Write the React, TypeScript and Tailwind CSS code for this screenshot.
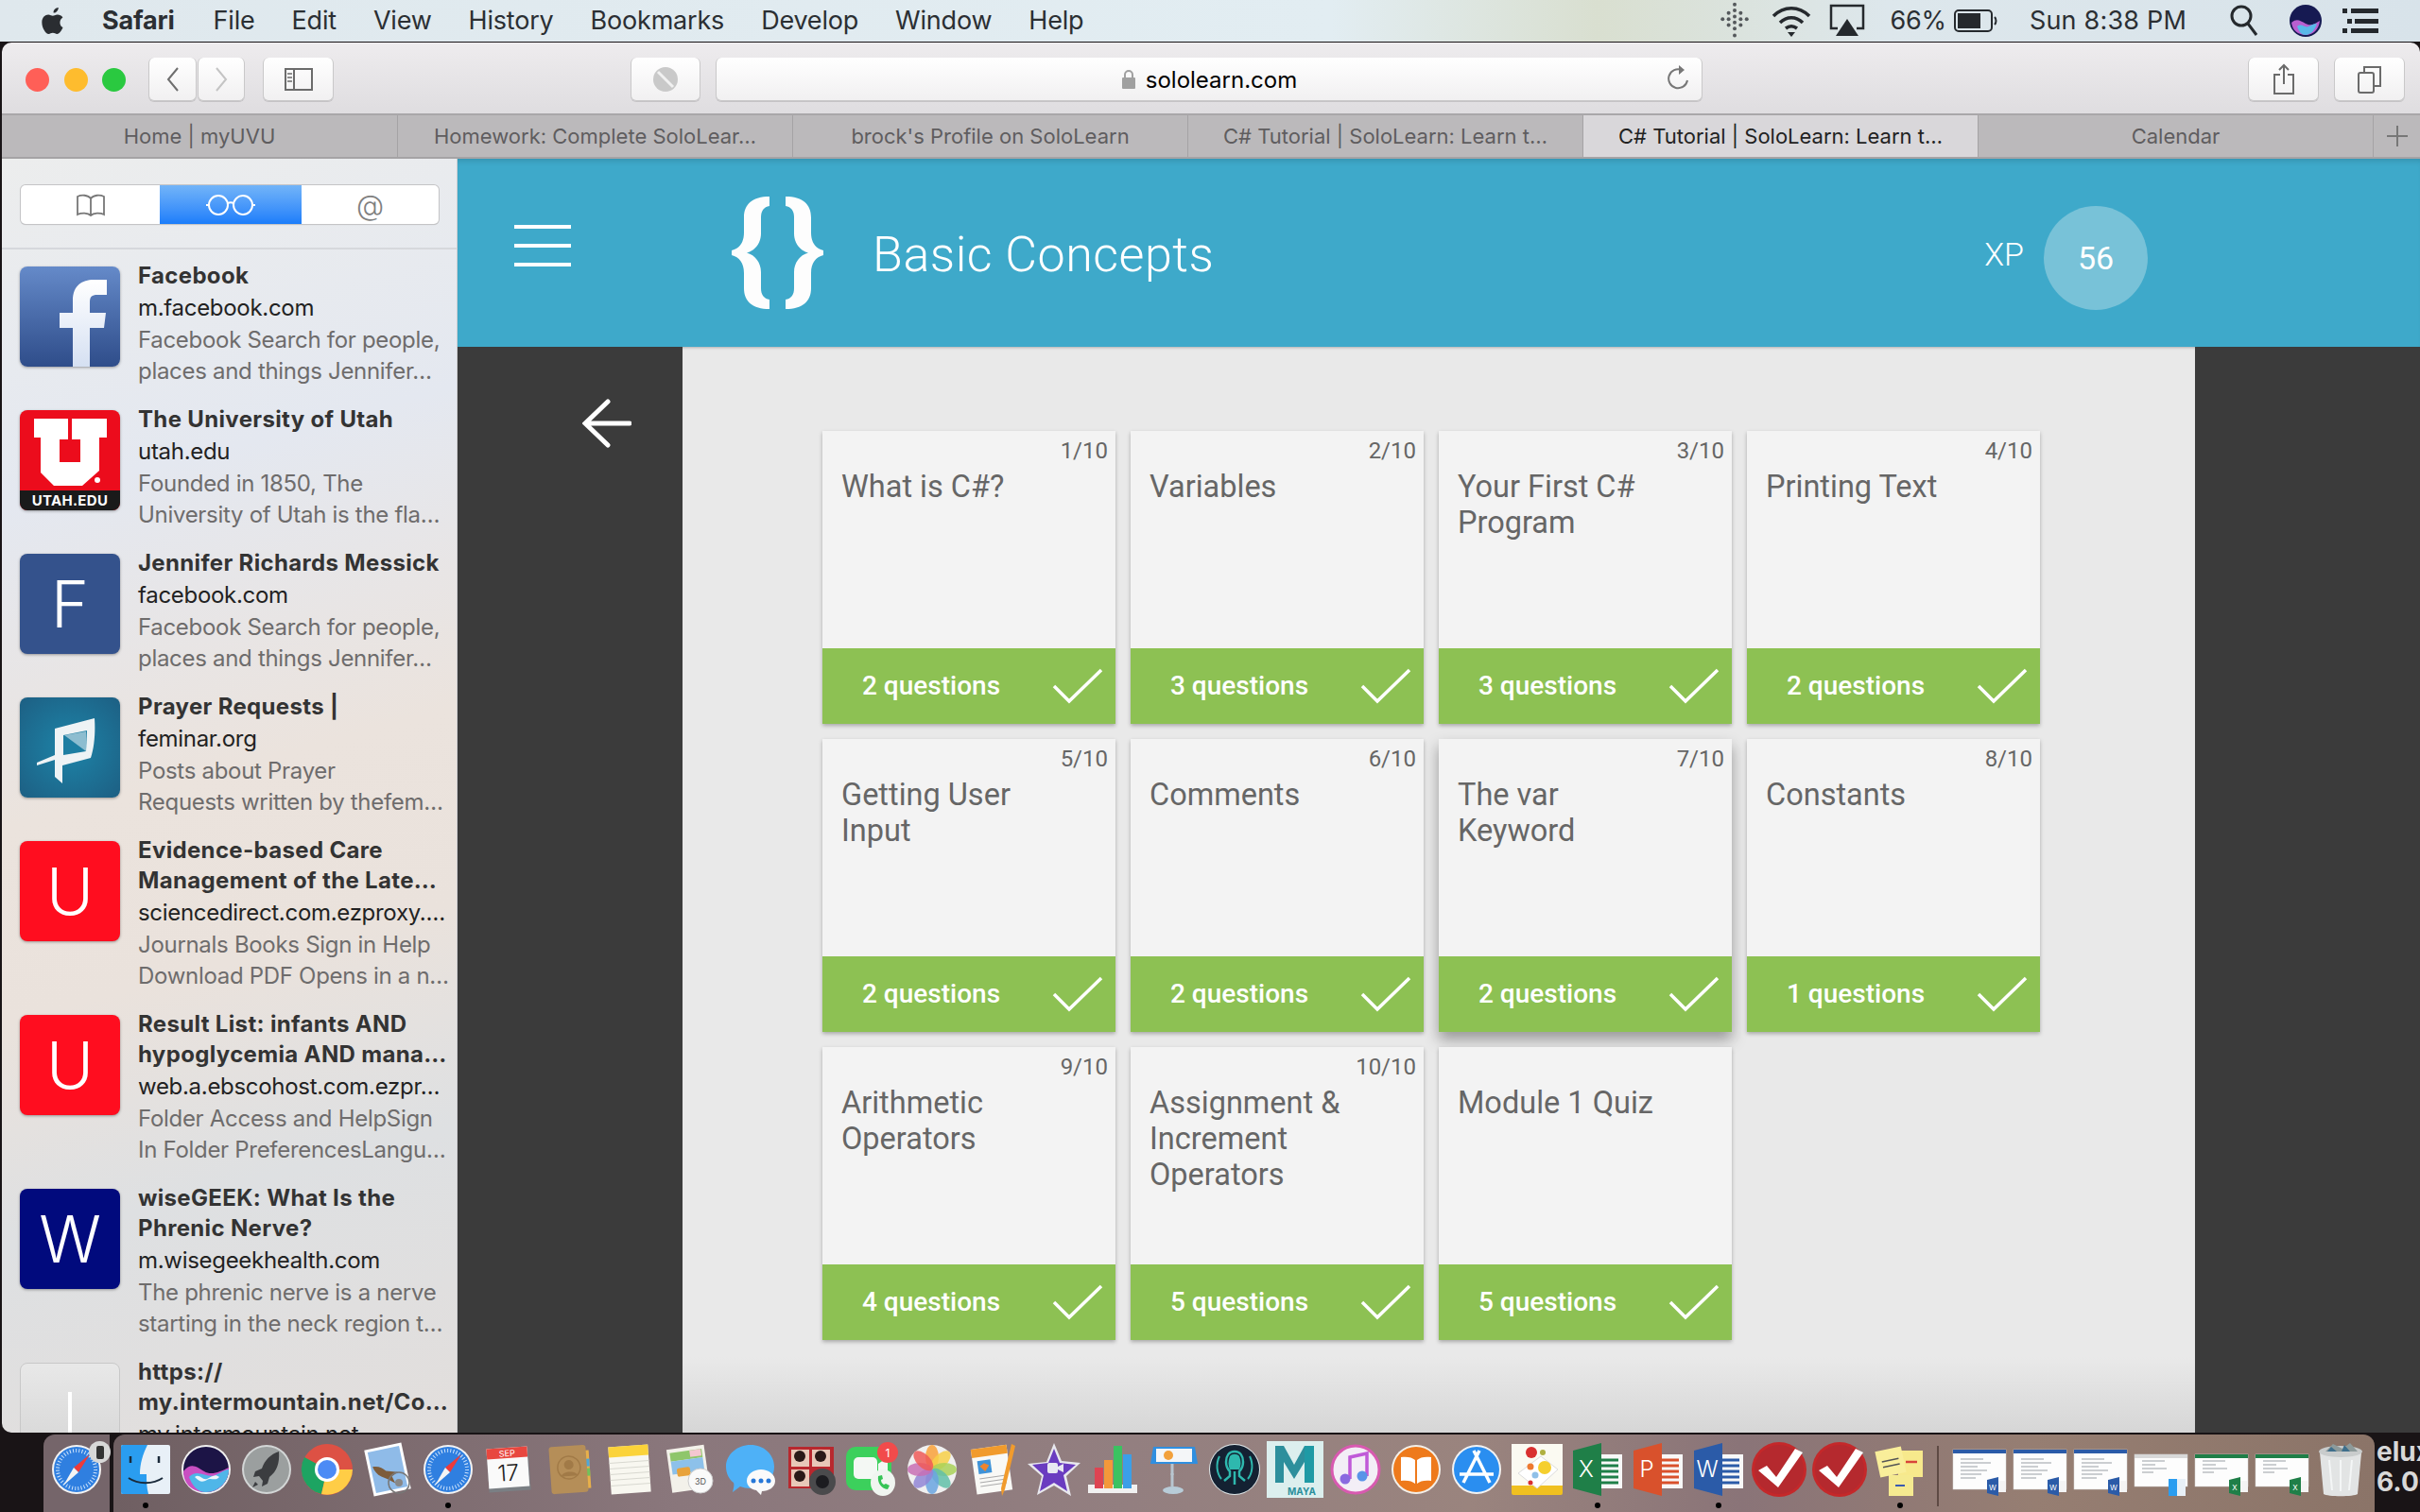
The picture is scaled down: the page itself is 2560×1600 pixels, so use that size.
import type { ReactNode } from 'react'

const menus = ['File', 'Edit', 'View', 'History', 'Bookmarks', 'Develop', 'Window', 'Help']

const tabs = [
  'Home | myUVU',
  'Homework: Complete SoloLear…',
  "brock's Profile on SoloLearn",
  'C# Tutorial | SoloLearn: Learn t…',
  'C# Tutorial | SoloLearn: Learn t…',
  'Calendar',
]

const lessons = [
  { title: 'What is C#?', count: '1/10', q: '2 questions' },
  { title: 'Variables', count: '2/10', q: '3 questions' },
  { title: 'Your First C# Program', count: '3/10', q: '3 questions' },
  { title: 'Printing Text', count: '4/10', q: '2 questions' },
  { title: 'Getting User Input', count: '5/10', q: '2 questions' },
  { title: 'Comments', count: '6/10', q: '2 questions' },
  { title: 'The var Keyword', count: '7/10', q: '2 questions', hover: true },
  { title: 'Constants', count: '8/10', q: '1 questions' },
  { title: 'Arithmetic Operators', count: '9/10', q: '4 questions' },
  { title: 'Assignment & Increment Operators', count: '10/10', q: '5 questions' },
  { title: 'Module 1 Quiz', count: '', q: '5 questions' },
]

const FacebookTile = () => (
  <div className="w-[106px] h-[106px] rounded-[8px] overflow-hidden shadow-[0_1px_3px_rgba(0,0,0,0.35)] bg-linear-to-b from-[#658ac9] to-[#2f4d8a]">
    <svg viewBox="0 0 106 106" className="w-full h-full">
      <defs>
        <linearGradient id="fbf" x1="0" y1="0" x2="0" y2="1">
          <stop offset="0" stopColor="#ffffff" />
          <stop offset="1" stopColor="#d5e0f2" />
        </linearGradient>
      </defs>
      <path d="M56 106V65H42V49h14V36c0-16 10-22 22-22h14v16H82c-6 0-8 2-8 8v11h17l-2 16H74v41z" fill="url(#fbf)" />
    </svg>
  </div>
)

const UtahTile = () => (
  <div className="w-[106px] h-[106px] rounded-[8px] overflow-hidden shadow-[0_1px_3px_rgba(0,0,0,0.35)] bg-[#ec0c1c] flex flex-col">
    <svg viewBox="0 0 106 85" className="w-[106px] h-[85px] shrink-0">
      <path d="M15 9h36v22h-9v24h22V31h-9V9h37v20h-8v35L66 80H36L22 66V29h-7z" fill="#fff" />
      <circle cx="82" cy="74" r="3" fill="#fff" />
    </svg>
    <div className="flex-1 bg-[#1a1a1a] text-white font-bold text-[15px] leading-[21px] text-center tracking-[0.3px]">UTAH.EDU</div>
  </div>
)

const PrayerTile = () => (
  <div className="w-[106px] h-[106px] rounded-[8px] overflow-hidden shadow-[0_1px_3px_rgba(0,0,0,0.35)] bg-[radial-gradient(circle,#1d84a8,#1d5f83)]">
    <svg viewBox="0 0 106 106" className="w-full h-full">
      <path d="M37 33L79 22c1 14 0 30-4 42L45 72v19l-8-7V66l-19 6v-3l19-8z" fill="#eef3f5" />
      <path d="M46 40l25-5-1 22-24 4z" fill="#1d7ea2" />
      <path d="M47 40l23 17V36z" fill="#d8e8ee" opacity="0.6" />
    </svg>
  </div>
)

const LetterTile = ({ letter, color }: { letter: string; color: string }) => (
  <div
    className="w-[106px] h-[106px] rounded-[8px] flex items-center justify-center text-white text-[68px] font-light leading-none shadow-[0_1px_3px_rgba(0,0,0,0.35)]"
    style={{ backgroundColor: color }}
  >
    {letter}
  </div>
)

const reading: { tile: ReactNode; title: string[]; url: string; text: string[] }[] = [
  { tile: <FacebookTile />, title: ['Facebook'], url: 'm.facebook.com', text: ['Facebook Search for people,', 'places and things Jennifer…'] },
  { tile: <UtahTile />, title: ['The University of Utah'], url: 'utah.edu', text: ['Founded in 1850, The', 'University of Utah is the fla…'] },
  { tile: <LetterTile letter="F" color="#34528c" />, title: ['Jennifer Richards Messick'], url: 'facebook.com', text: ['Facebook Search for people,', 'places and things Jennifer…'] },
  { tile: <PrayerTile />, title: ['Prayer Requests |'], url: 'feminar.org', text: ['Posts about Prayer', 'Requests written by thefem…'] },
  { tile: <LetterTile letter="U" color="#ff0d1f" />, title: ['Evidence-based Care', 'Management of the Late…'], url: 'sciencedirect.com.ezproxy.…', text: ['Journals Books Sign in Help', 'Download PDF Opens in a n…'] },
  { tile: <LetterTile letter="U" color="#ff0d1f" />, title: ['Result List: infants AND', 'hypoglycemia AND mana…'], url: 'web.a.ebscohost.com.ezpr…', text: ['Folder Access and HelpSign', 'In Folder PreferencesLangu…'] },
  { tile: <LetterTile letter="W" color="#010a7d" />, title: ['wiseGEEK: What Is the', 'Phrenic Nerve?'], url: 'm.wisegeekhealth.com', text: ['The phrenic nerve is a nerve', 'starting in the neck region t…'] },
]

const Svg60 = ({ children }: { children: ReactNode }) => (
  <svg viewBox="0 0 60 60" className="w-[60px] h-[60px]">
    {children}
  </svg>
)

const SafariIcon = () => (
  <Svg60>
    <circle cx="30" cy="30" r="26" fill="#f3f3f3" />
    <circle cx="30" cy="30" r="24" fill="#2f7fe0" />
    <circle cx="30" cy="30" r="20" fill="none" stroke="#cfe4fb" strokeWidth="4" strokeDasharray="1 2.2" />
    <path d="M44 14L27 28l5 5z" fill="#ee3a3a" />
    <path d="M16 47l16-14-5-5z" fill="#f4f4f4" />
  </Svg60>
)

const FinderIcon = () => (
  <Svg60>
    <rect x="4" y="4" width="52" height="52" rx="2" fill="#e8f0f7" />
    <path d="M4 6a2 2 0 012-2h26c-5 10-8 20-8 31h7c0 7 0 14 2 21H6a2 2 0 01-2-2z" fill="#2a9df0" />
    <path d="M14 16v7M44 16v7" stroke="#1a2a3a" strokeWidth="2.5" />
    <path d="M12 39c10 7 26 7 36 0" stroke="#1a2a3a" strokeWidth="2" fill="none" />
  </Svg60>
)

const SiriIcon = () => (
  <Svg60>
    <circle cx="30" cy="30" r="26" fill="#f0f0f0" />
    <circle cx="30" cy="30" r="24" fill="#1c1446" />
    <path d="M6 32c8-10 14-5 22 0s17 0 26-4c0 15-10 26-24 26S6 46 6 32z" fill="#c94fc2" />
    <path d="M12 38c8-10 20 2 28-2s11-6 14-6c0 12-10 24-24 24-10 0-15-8-18-16z" fill="#4fb6e8" />
    <path d="M18 38c5-4 8 4 13 2s8-6 13-2c-5 5-8 0-13 3s-8 2-13-3z" fill="#eef7fb" />
  </Svg60>
)

const LaunchpadIcon = () => (
  <Svg60>
    <circle cx="30" cy="30" r="26" fill="#d3d6d6" />
    <circle cx="30" cy="30" r="24" fill="#9b9f9f" />
    <path d="M43 11c-9 3-15 9-18 18l-7 3-2 6 6-1 4 5-1 6 6-3 2-7c8-6 11-15 10-27z" fill="#3b3d40" />
    <path d="M18 43l-3 6 6-3z" fill="#3b3d40" />
  </Svg60>
)

const ChromeIcon = () => (
  <Svg60>
    <circle cx="30" cy="30" r="27" fill="#dd5144" />
    <path d="M30 30L6 17A27 27 0 0024 56z" fill="#1da462" />
    <path d="M30 30h27a27 27 0 01-33 26z" fill="#ffcd46" />
    <circle cx="30" cy="30" r="13" fill="#fff" />
    <circle cx="30" cy="30" r="10" fill="#4c8bf5" />
  </Svg60>
)

const MailIcon = () => (
  <Svg60>
    <g transform="rotate(-12 30 30)">
      <rect x="10" y="5" width="40" height="50" fill="#fff" />
      <rect x="13" y="8" width="34" height="44" fill="#8fbbe8" />
      <path d="M15 24c6 0 10 3 13 7l12 4-7 3 2 8-7-6-6-4c-4-3-6-7-7-12z" fill="#7d5c3a" />
    </g>
    <circle cx="42" cy="44" r="11" fill="none" stroke="#777" strokeWidth="1.5" />
    <circle cx="42" cy="44" r="4" fill="#888" />
  </Svg60>
)

const CalendarIcon = () => (
  <Svg60>
    <g transform="rotate(-4 30 30)">
      <rect x="8" y="9" width="44" height="44" fill="#7a7f84" />
      <rect x="8" y="7" width="43" height="42" fill="#fafafa" />
      <rect x="8" y="7" width="43" height="11" fill="#e8473f" />
      <text x="29.500" y="16" textAnchor="middle" fontSize="9" fill="#fff" fontFamily="Inter, sans-serif">SEP</text>
      <text x="29.500" y="42" textAnchor="middle" fontSize="24" fill="#222" fontFamily="Inter, sans-serif" fontWeight="300">17</text>
    </g>
  </Svg60>
)

const ContactsIcon = () => (
  <Svg60>
    <g transform="rotate(-4 30 30)">
      <rect x="48" y="11" width="4" height="40" fill="#e8b04a" />
      <rect x="48" y="20" width="4" height="8" fill="#4fa7d8" />
      <rect x="48" y="30" width="4" height="8" fill="#71c35a" />
      <rect x="10" y="5" width="39" height="50" rx="3" fill="#b58e58" />
      <circle cx="30" cy="28" r="12" fill="none" stroke="#a17a47" strokeWidth="1.500" />
      <circle cx="30" cy="25" r="5" fill="#a17a47" />
      <path d="M21 37c2-6 16-6 18 0z" fill="#a17a47" />
    </g>
  </Svg60>
)

const NotesIcon = () => (
  <Svg60>
    <g transform="rotate(-4 30 30)">
      <rect x="9" y="5" width="42" height="50" fill="#f8f7f0" />
      <rect x="9" y="5" width="42" height="11" fill="#fbd33a" />
      <path d="M9 22h42M9 28h42M9 34h42M9 40h42M9 46h42" stroke="#d8d8d0" strokeWidth="1" />
    </g>
  </Svg60>
)

const MapsIcon = () => (
  <Svg60>
    <g transform="rotate(-8 30 30)">
      <rect x="8" y="6" width="40" height="46" fill="#f3f1ea" />
      <rect x="11" y="10" width="34" height="9" fill="#8fc66b" />
      <rect x="11" y="19" width="34" height="14" fill="#8dc1ea" />
      <rect x="16" y="27" width="14" height="9" rx="2" fill="#e8a23a" />
      <rect x="32" y="10" width="12" height="7" fill="#f5c7d0" />
    </g>
    <circle cx="41" cy="42" r="13" fill="#fafafa" stroke="#ccc" />
    <text x="41" y="46" textAnchor="middle" fontSize="9" fill="#555" fontFamily="Inter, sans-serif">3D</text>
  </Svg60>
)

const MessagesIcon = () => (
  <Svg60>
    <path d="M30 4c14 0 25 10 25 23S44 50 30 50c-4 0-8-1-11-2l-8 6c1-4 2-8 1-10C7 40 4 34 4 27 4 14 16 4 30 4z" fill="#4eb1f7" />
    <path d="M41 30c8 0 15 5 15 12s-7 11-14 11l-1 4-5-5c-6-1-10-5-10-10 0-7 7-12 15-12z" fill="#fafafa" />
    <circle cx="33" cy="42" r="2.500" fill="#2778d8" />
    <circle cx="41" cy="42" r="2.500" fill="#2778d8" />
    <circle cx="49" cy="42" r="2.500" fill="#2778d8" />
  </Svg60>
)

const PhotoBoothIcon = () => (
  <Svg60>
    <rect x="6" y="6" width="48" height="44" fill="#b8282e" />
    <rect x="9" y="9" width="19" height="18" fill="#e8c8b8" />
    <rect x="31" y="9" width="19" height="18" fill="#e8c8b8" />
    <rect x="9" y="30" width="19" height="18" fill="#e8c8b8" />
    <circle cx="18" cy="16" r="6" fill="#2a1a18" />
    <circle cx="40" cy="16" r="6" fill="#2a1a18" />
    <circle cx="18" cy="37" r="6" fill="#2a1a18" />
    <circle cx="42" cy="43" r="14" fill="#4a4a4c" />
    <circle cx="42" cy="43" r="7" fill="#1c1c20" />
  </Svg60>
)

const FaceTimeIcon = () => (
  <Svg60>
    <rect x="3" y="6" width="48" height="46" rx="10" fill="#3cd05c" />
    <rect x="11" y="17" width="25" height="23" rx="5" fill="#f4f8f4" />
    <path d="M37 24l10-7v23l-10-7z" fill="#f4f8f4" />
    <ellipse cx="42" cy="44" rx="13" ry="14" fill="#f0f5f0" />
    <path d="M37 37c-1 7 3 13 10 14l2-4-4-2-2 1c-2-1-3-3-3-5l2-1-1-4z" fill="#36c455" />
    <circle cx="47" cy="12" r="11" fill="#f24b4b" />
    <text x="47" y="16.500" textAnchor="middle" fontSize="12" fill="#fff" fontFamily="Inter, sans-serif">1</text>
  </Svg60>
)

const petals = ['#f9a13a', '#f7d048', '#a9d158', '#62c0a8', '#6aa5e0', '#9286d6', '#c86fb4', '#ee5a58']

const PhotosIcon = () => (
  <Svg60>
    <circle cx="30" cy="30" r="26" fill="#f0f0f0" />
    {petals.map((c, i) => (
      <ellipse key={c} cx="30" cy="17" rx="7" ry="13" fill={c} opacity="0.85" transform={`rotate(${i * 45} 30 30)`} />
    ))}
  </Svg60>
)

const PagesIcon = () => (
  <Svg60>
    <g transform="rotate(-8 30 30)">
      <rect x="10" y="6" width="38" height="48" fill="#f9f9f6" />
      <rect x="10" y="6" width="38" height="9" fill="#f19b2c" />
      <rect x="15" y="19" width="14" height="14" fill="#3f93d8" />
      <path d="M22 22l5 3-5 6-5-6z" fill="#f0842c" />
      <path d="M15 38h28M15 42h28M15 46h28" stroke="#aaa" strokeWidth="1" />
    </g>
    <path d="M50 3l4 2-11 46-3 7-1-8z" fill="#f19b2c" />
  </Svg60>
)

const IMovieIcon = () => (
  <Svg60>
    <path d="M31 2l8 19 20 2-15 14 5 21-18-11-18 10 5-20L3 24l20-2z" fill="#e8e8ee" />
    <path d="M31 8l6 15 17 2-13 11 4 17-14-9-15 9 4-17L8 25l17-2z" fill="#6a3cc0" />
    <rect x="24" y="23" width="11" height="11" rx="2" fill="#e8e8f2" />
    <path d="M35 27l6-3v9l-6-3z" fill="#e8e8f2" />
  </Svg60>
)

const NumbersIcon = () => (
  <Svg60>
    <rect x="3" y="46" width="52" height="9" fill="#f1f1f1" />
    <rect x="10" y="28" width="9" height="22" fill="#de4452" />
    <rect x="20" y="20" width="9" height="30" fill="#f4983a" />
    <rect x="30" y="5" width="9" height="45" fill="#3bc261" />
    <rect x="40" y="14" width="9" height="36" fill="#3b9fe8" />
  </Svg60>
)

const KeynoteIcon = () => (
  <Svg60>
    <path d="M8 6h44l3 18H5z" fill="#2f8fe0" />
    <rect x="11" y="8" width="38" height="14" fill="#f4f6f8" />
    <circle cx="24" cy="15" r="5" fill="#f2a13c" />
    <path d="M28 34v14" stroke="#b8c6d0" strokeWidth="3" />
    <ellipse cx="29" cy="52" rx="11" ry="4" fill="#b8ccd8" />
    <path d="M28 24v12" stroke="#b8c6d0" strokeWidth="3" />
  </Svg60>
)

const KrakenIcon = () => (
  <Svg60>
    <circle cx="30" cy="30" r="27" fill="#dfe8ea" />
    <circle cx="30" cy="30" r="26" fill="#142132" />
    <path d="M30 11c6 0 9 5 9 11 0 5-2 8-4 10v5l6 5M30 11c-6 0-9 5-9 11 0 5 2 8 4 10v5l-6 5M30 32v14" stroke="#2eb8ae" strokeWidth="2.500" fill="none" />
    <path d="M25 16c-2 5-2 10 0 14h10c2-4 2-9 0-14-2-3-8-3-10 0z" fill="#2eb8ae" />
    <path d="M14 16c-4 8-3 18 2 24M46 16c4 8 3 18-2 24" stroke="#2eb8ae" strokeWidth="2" fill="none" />
  </Svg60>
)

const MayaIcon = () => (
  <svg viewBox="0 0 60 60" className="w-[60px] h-[60px]">
    <rect width="60" height="60" fill="#dcefee" />
    <path d="M9 44V5h9l11 20L40 5h10v39H40V22L29 40 18 22v22z" fill="#2d8f9c" />
    <path d="M40 5h10v39H40z" fill="#1f9aa5" />
    <text x="37" y="57" textAnchor="middle" fontSize="10" fontWeight="bold" fill="#2d8f9c" fontFamily="Inter, sans-serif">MAYA</text>
  </svg>
)

const ITunesIcon = () => (
  <Svg60>
    <circle cx="30" cy="30" r="25" fill="#f3eef6" stroke="#d85ab0" strokeWidth="3" />
    <path d="M24 40V17l18-4v24" fill="none" stroke="#c05ad8" strokeWidth="3.500" />
    <circle cx="19" cy="40" r="5.500" fill="#8a6ae0" />
    <circle cx="37" cy="37" r="5.500" fill="#5a94e8" />
  </Svg60>
)

const IBooksIcon = () => (
  <Svg60>
    <circle cx="30" cy="30" r="26" fill="#f3f0ea" />
    <circle cx="30" cy="30" r="24" fill="#ee7a1c" />
    <path d="M14 17c6-1 12 0 15 3v25c-3-3-9-4-15-3zM46 17c-6-1-12 0-15 3v25c3-3 9-4 15-3z" fill="#fff" />
  </Svg60>
)

const AppStoreIcon = () => (
  <Svg60>
    <circle cx="30" cy="30" r="26" fill="#f3f3f3" />
    <circle cx="30" cy="30" r="24" fill="#2a8ef0" />
    <path d="M33 10L16 44M27 10l17 34M12 35h36" stroke="#fff" strokeWidth="3.500" />
  </Svg60>
)

const PaintIcon = () => (
  <Svg60>
    <rect x="3" y="3" width="54" height="54" rx="2" fill="#f0c020" />
    <rect x="3" y="3" width="54" height="44" fill="#fbfaf2" />
    <path d="M10 34L34 16l18 14-22 20z" fill="#ffffff" stroke="#ddd" />
    <circle cx="24" cy="12" r="6" fill="#d93030" />
    <circle cx="36" cy="12" r="3" fill="#b0b040" />
    <circle cx="38" cy="28" r="7" fill="#f5cf2e" />
    <circle cx="23" cy="27" r="3.500" fill="#ee7a30" />
    <circle cx="28" cy="36" r="3.500" fill="#8fc0e8" />
    <circle cx="23" cy="44" r="2.500" fill="#d93030" />
  </Svg60>
)

const OfficeIcon = ({ color, letter }: { color: string; letter: string }) => (
  <Svg60>
    <rect x="30" y="14" width="26" height="36" fill="#f8f8f8" />
    <path d="M34 20h18M34 26h18M34 32h18M34 38h18M34 44h18" stroke={color} strokeWidth="3" />
    <path d="M4 10l30-8v56L4 50z" fill={color} />
    <text x="18" y="38" textAnchor="middle" fontSize="24" fill="#fff" fontWeight="300" fontFamily="Inter, sans-serif">{letter}</text>
  </Svg60>
)

const WunderIcon = () => (
  <Svg60>
    <circle cx="30" cy="30" r="29" fill="#c4282a" />
    <circle cx="30" cy="30" r="26" fill="#b5292e" />
    <path d="M8 31l9-5 10 12L47 8l8 4-26 37z" fill="#fff" />
  </Svg60>
)

const StickiesIcon = () => (
  <Svg60>
    <rect x="28" y="10" width="26" height="28" fill="#f7e98c" />
    <rect x="18" y="36" width="26" height="22" fill="#f5ea90" />
    <g transform="rotate(-12 20 22)">
      <rect x="6" y="8" width="28" height="28" fill="#f9ee9a" />
      <path d="M11 20h18M11 26h18" stroke="#555" strokeWidth="1.500" />
    </g>
    <path d="M36 22h12" stroke="#d8443a" strokeWidth="2.500" />
    <path d="M25 47h10" stroke="#3a5ab0" strokeWidth="2" />
  </Svg60>
)

const TrashIcon = () => (
  <Svg60>
    <path d="M6 12h44l-4 44c-4 3-32 3-36 0z" fill="#e2e4e4" />
    <ellipse cx="28" cy="11" rx="23" ry="6" fill="#c9cccc" />
    <path d="M12 11l8-8 10 5 8-6 8 9z" fill="#8d9a9a" />
    <path d="M18 6l6 5-10 0zM32 4l6 7-9 0z" fill="#3f6f8c" />
    <path d="M16 20l3 32M28 20v33M40 20l-3 32" stroke="#f4f6f6" strokeWidth="2" />
  </Svg60>
)

const DocThumb = ({ tall, color, letter, finder }: { tall?: boolean; color: string; letter: string; finder?: boolean }) => (
  <Svg60>
    <rect x="2" y={tall ? 9 : 14} width="56" height={tall ? 42 : 34} fill="#fdfdfd" stroke="#d8d8d8" strokeWidth="0.500" />
    <rect x="2" y={tall ? 9 : 14} width="56" height="4" fill={finder ? '#d8d8d8' : color} />
    <path d={tall ? 'M10 19h24M10 23h32M10 27h18M10 31h28M10 35h22M10 39h16' : 'M10 21h24M10 25h14M10 29h26M10 33h12'} stroke="#9aa0a6" strokeWidth="1.200" />
    {finder ? (
      <g>
        <rect x="38" y="40" width="18" height="18" fill="#2a9df0" />
        <rect x="47" y="40" width="9" height="18" fill="#e8f0f7" />
      </g>
    ) : (
      <g>
        <rect x="48" y="42" width="10" height="12" fill="#f4f4f4" />
        <path d="M38 41l12-3v20l-12-3z" fill={color} />
        <text x="44" y="52" textAnchor="middle" fontSize="8" fill="#fff" fontFamily="Inter, sans-serif">{letter}</text>
      </g>
    )}
  </Svg60>
)

const word = '#2b5ba8'
const excel = '#1f7f48'

const dockApps: { icon: ReactNode; dot?: boolean }[] = [
  { icon: <FinderIcon />, dot: true },
  { icon: <SiriIcon /> },
  { icon: <LaunchpadIcon /> },
  { icon: <ChromeIcon /> },
  { icon: <MailIcon /> },
  { icon: <SafariIcon />, dot: true },
  { icon: <CalendarIcon /> },
  { icon: <ContactsIcon /> },
  { icon: <NotesIcon /> },
  { icon: <MapsIcon /> },
  { icon: <MessagesIcon /> },
  { icon: <PhotoBoothIcon /> },
  { icon: <FaceTimeIcon /> },
  { icon: <PhotosIcon /> },
  { icon: <PagesIcon /> },
  { icon: <IMovieIcon /> },
  { icon: <NumbersIcon /> },
  { icon: <KeynoteIcon /> },
  { icon: <KrakenIcon /> },
  { icon: <MayaIcon /> },
  { icon: <ITunesIcon /> },
  { icon: <IBooksIcon /> },
  { icon: <AppStoreIcon /> },
  { icon: <PaintIcon /> },
  { icon: <OfficeIcon color={excel} letter="X" />, dot: true },
  { icon: <OfficeIcon color="#d9512c" letter="P" /> },
  { icon: <OfficeIcon color={word} letter="W" />, dot: true },
  { icon: <WunderIcon /> },
  { icon: <WunderIcon /> },
  { icon: <StickiesIcon />, dot: true },
]

const dockDocs: ReactNode[] = [
  <DocThumb tall color={word} letter="W" />,
  <DocThumb tall color={word} letter="W" />,
  <DocThumb tall color={word} letter="W" />,
  <DocThumb finder color={word} letter="" />,
  <DocThumb color={excel} letter="X" />,
  <DocThumb color={excel} letter="X" />,
  <TrashIcon />,
]

const DockSlot = ({ children, dot }: { children: ReactNode; dot?: boolean }) => (
  <div className="w-16 shrink-0 flex flex-col items-center pt-[7px]">
    <div className="h-[60px] flex items-center justify-center">{children}</div>
    {dot && <div className="w-[6px] h-[6px] mt-[5px] rounded-full bg-black" />}
  </div>
)

const ToolButton = ({ className, children }: { className: string; children: ReactNode }) => (
  <div className={`h-[46px] shrink-0 rounded-[6px] bg-linear-to-b from-white to-[#f1f0f1] border-b border-x border-[#c9c8c9] shadow-[0_1px_0_rgba(0,0,0,0.12)] flex items-center justify-center ${className}`}>
    {children}
  </div>
)

const LessonCard = ({ title, count, q, hover }: { title: string; count: string; q: string; hover?: boolean }) => (
  <div className={`h-[310px] bg-[#f3f3f3] flex flex-col ${hover ? 'shadow-[0_8px_14px_rgba(0,0,0,0.35)]' : 'shadow-[0_2px_4px_rgba(0,0,0,0.28)]'}`}>
    <div className="flex-1 pl-5 pr-[8px] pt-[6px]">
      <div className="text-right text-[24px] leading-[30px] h-[30px] text-[#666]">{count}</div>
      <div className="text-[32.5px] leading-[38px] text-[#666] mt-[4px] max-w-[225px]">{title}</div>
    </div>
    <div className="h-20 bg-[#8dc153] flex items-center justify-between pl-[42px] pr-[13px] text-white text-[28px] font-medium">
      <span>{q}</span>
      <svg viewBox="0 0 54 38" className="w-[54px] h-[38px]" fill="none" stroke="#fff" strokeWidth="3.5">
        <path d="M2 19l16 16L52 2" />
      </svg>
    </div>
  </div>
)

const ReadingItem = ({ tile, title, url, text }: { tile: ReactNode; title: string[]; url: string; text: string[] }) => (
  <div className="flex gap-[19px] pl-[19px] pb-[19px] shrink-0">
    <div className="pt-[6px]">{tile}</div>
    <div className="text-[24px] whitespace-nowrap tracking-[-0.3px] min-w-0">
      <div className="mb-px">
        {title.map(t => (
          <div key={t} className="font-bold text-[#333] leading-[32px] tracking-[0.34px]">{t}</div>
        ))}
      </div>
      <div className="text-[#222] leading-[34px]">{url}</div>
      {text.map(t => (
        <div key={t} className="text-[#6e6c6c] leading-[33px]">{t}</div>
      ))}
    </div>
  </div>
)

const App = () => (
  <div className="w-[2560px] h-[1600px] flex flex-col overflow-hidden bg-[#191416] font-['Inter',sans-serif]">
    {/* menu bar */}
    <div className="h-[44px] shrink-0 flex items-center pl-[42px] text-[27px] tracking-[-0.2px] text-[#2b2f33] bg-[linear-gradient(90deg,#dfe8ed_0%,#e2edf2_55%,#d9dfd0_66%,#dde7ec_78%,#d8e3ea_100%)]">
      <svg viewBox="0 0 24 28" className="w-[28px] h-[34px] mr-[38px]" fill="#2a2d31">
        <path d="M17 2c0 2.500-2 5-4.500 4.800C12.200 4.300 14.500 2.200 17 2zM21 20c-1 2.500-3 6-5.300 6-1.500 0-2-1-3.800-1s-2.400 1-3.800 1C5.500 26 2 20.500 2 15.500c0-4.500 3-7 5.800-7 1.700 0 3 1.100 4.100 1.100s2.600-1.300 4.500-1.100c1.400 0 3.400.7 4.500 2.400-3.700 2.300-3 7.800.1 9.100z" />
      </svg>
      <span className="font-bold mr-[41px]">Safari</span>
      <div className="flex gap-[39px]">
        {menus.map(m => (
          <span key={m}>{m}</span>
        ))}
      </div>
      <div className="ml-auto flex items-center pr-[44px]">
        <svg viewBox="0 0 36 44" className="w-[36px] h-[40px] mr-[20px]" fill="#55595c">
          {[[18, 3], [18, 10], [18, 17], [18, 24], [18, 31], [18, 39], [11, 13], [11, 20], [11, 27], [25, 13], [25, 20], [25, 27], [4, 20], [32, 20]].map(([cx, cy]) => (
            <circle key={`${cx}-${cy}`} cx={cx} cy={cy} r="2.200" />
          ))}
        </svg>
        <svg viewBox="0 0 44 36" className="w-[44px] h-[36px] mr-[18px]" fill="none" stroke="#25292d" strokeWidth="3.500">
          <path d="M3 13c11-11 27-11 38 0M10 20c7-7 17-7 24 0M16 26c4-3 8-3 12 0" />
          <path d="M22 35l-4-5h8z" fill="#25292d" stroke="none" />
        </svg>
        <svg viewBox="0 0 38 36" className="w-[38px] h-[36px] mr-[26px]" fill="none">
          <path d="M9 26H2V2h34v24h-7" stroke="#25292d" strokeWidth="2.500" />
          <path d="M19 16l12 18H7z" fill="#25292d" />
        </svg>
        <span className="mr-[8px]">66%</span>
        <svg viewBox="0 0 46 26" className="w-[46px] h-[26px] mr-[34px]" fill="none">
          <rect x="1" y="2" width="39" height="22" rx="4" stroke="#25292d" strokeWidth="2" />
          <rect x="4" y="5" width="24" height="16" fill="#25292d" />
          <path d="M43 9c2 2 2 6 0 8" stroke="#25292d" strokeWidth="2" />
        </svg>
        <span className="mr-[45px] tracking-[0.2px]">Sun 8:38 PM</span>
        <svg viewBox="0 0 32 36" className="w-[32px] h-[36px] mr-[32px]" fill="none" stroke="#25292d" strokeWidth="3">
          <circle cx="13" cy="13" r="10" />
          <path d="M20 21l9 12" />
        </svg>
        <svg viewBox="0 0 34 34" className="w-[34px] h-[34px] mr-[22px]">
          <circle cx="17" cy="17" r="17" fill="#161a52" />
          <path d="M2 19c6-5 9-2 15 1s10 0 15-3c-1 9-7 15-15 15S3 27 2 19z" fill="#b95fd0" />
          <path d="M8 23c5-4 8 2 12 0s6-3 9-3c-2 7-7 12-12 12s-7-4-9-9z" fill="#58b8e8" />
        </svg>
        <svg viewBox="0 0 38 26" className="w-[38px] h-[26px]" fill="#25292d">
          <path d="M0 0h5v5H0zM9 0h29v5H9zM5 11h5v5H5zM13 11h25v5H13zM0 21h5v5H0zM9 21h29v5H9z" />
        </svg>
      </div>
    </div>

    {/* safari window */}
    <div className="h-[1471px] shrink-0 ml-[2px] mt-px rounded-t-[10px] overflow-hidden flex flex-col">
      <div className="h-[77px] shrink-0 pt-[3px] bg-linear-to-b from-[#eeecee] to-[#dfdde0] border-b-2 border-[#a9a7a9] flex items-center">
        <div className="w-[25px] h-[25px] rounded-full bg-[#ff5f57] ml-[25px]" />
        <div className="w-[25px] h-[25px] rounded-full bg-[#febc2e] ml-[16px]" />
        <div className="w-[25px] h-[25px] rounded-full bg-[#2ac940] ml-[15px]" />
        <ToolButton className="w-[51px] ml-[24px]">
          <svg viewBox="0 0 16 30" className="w-[16px] h-[30px]" fill="none" stroke="#6e6e6e" strokeWidth="2">
            <path d="M13 3L3 15l10 12" />
          </svg>
        </ToolButton>
        <ToolButton className="w-[50px] ml-px">
          <svg viewBox="0 0 16 30" className="w-[16px] h-[30px]" fill="none" stroke="#c4c4c4" strokeWidth="2">
            <path d="M3 3l10 12L3 27" />
          </svg>
        </ToolButton>
        <ToolButton className="w-[75px] ml-[19px]">
          <svg viewBox="0 0 30 24" className="w-[30px] h-[24px]" fill="none" stroke="#6b6b6b" strokeWidth="2">
            <rect x="1" y="1" width="28" height="22" />
            <path d="M10 1v22" />
            <path d="M3 6h5M3 10h5M3 14h5" strokeWidth="1.500" />
          </svg>
        </ToolButton>
        <ToolButton className="w-[74px] ml-[314px]">
          <svg viewBox="0 0 30 30" className="w-[30px] h-[30px]" fill="none">
            <circle cx="15" cy="15" r="13" fill="#c9c9c9" />
            <path d="M7 7l16 16" stroke="#f1f1f1" strokeWidth="3" />
          </svg>
        </ToolButton>
        <ToolButton className="w-[1044px] ml-[16px] relative">
          <svg viewBox="0 0 16 22" className="w-[16px] h-[22px] mr-[10px]" fill="#a0a0a0">
            <path d="M3 10V6a5 5 0 0110 0v4h-2V6a3 3 0 00-6 0v4z" />
            <rect x="1" y="9" width="14" height="12" rx="1" />
          </svg>
          <span className="text-[24px] text-black pt-[3px]">sololearn.com</span>
          <svg viewBox="0 0 24 30" className="absolute right-[12px] top-[7px] w-[24px] h-[30px]" fill="none" stroke="#777" strokeWidth="2">
            <path d="M15 6A10 10 0 1 0 21 17" />
            <path d="M12 1l6 5-6 5z" fill="#777" stroke="none" />
          </svg>
        </ToolButton>
        <ToolButton className="w-[75px] ml-auto">
          <svg viewBox="0 0 24 34" className="w-[24px] h-[34px]" fill="none" stroke="#6b6b6b" strokeWidth="2">
            <path d="M8 12H2v20h20V12h-6M12 22V2M7 7l5-5 5 5" />
          </svg>
        </ToolButton>
        <ToolButton className="w-[75px] ml-[16px] mr-[16px]">
          <svg viewBox="0 0 28 30" className="w-[28px] h-[30px]" fill="none" stroke="#6b6b6b" strokeWidth="2">
            <rect x="2" y="8" width="16" height="21" rx="2" />
            <path d="M8 8V2h17v20h-7" />
          </svg>
        </ToolButton>
      </div>

      <div className="h-[46px] shrink-0 bg-[#bbb9bb] border-b-2 border-[#a5a3a5] flex text-[22px] text-[#5f5d5f]">
        {tabs.map((t, i) => (
          <div
            key={`${t}-${i}`}
            className={`shrink-0 flex items-center justify-center border-r border-[#a5a3a5] whitespace-nowrap ${i === 4 ? 'bg-[#d9d7da] text-[#222]' : ''} ${i === 0 ? 'w-[419px]' : 'w-[418px]'}`}
          >
            {t}
          </div>
        ))}
        <div className="flex-1 flex items-center justify-center">
          <svg viewBox="0 0 24 24" className="w-[24px] h-[24px]" stroke="#777" strokeWidth="2">
            <path d="M12 1v22M1 12h22" />
          </svg>
        </div>
      </div>

      <div className="flex-1 flex min-h-0">
        {/* reading list */}
        <div className="w-[482px] shrink-0 flex flex-col overflow-hidden rounded-bl-[10px] bg-[linear-gradient(165deg,#eceded_0%,#e4e8f0_25%,#ebe3dd_48%,#eae2dc_62%,#dee0e2_78%,#e2dedc_100%)] border-r border-[#cfcfd2]">
          <div className="h-[96px] shrink-0 pt-[28px] pl-5 pr-[19px] border-b-2 border-[#d6d8dc]">
            <div className="h-[41px] flex rounded-[5px] bg-white shadow-[0_0_0_1px_#c4c4c6,0_1px_1px_rgba(0,0,0,0.2)] overflow-hidden">
              <div className="w-[147px] flex items-center justify-center">
                <svg viewBox="0 0 32 24" className="w-[32px] h-[24px]" fill="none" stroke="#777" strokeWidth="1.800">
                  <path d="M16 5C13 1 6 1 2 3v19c4-2 11-2 14 1 3-3 10-3 14-1V3c-4-2-11-2-14 2zM16 5v18" />
                </svg>
              </div>
              <div className="w-[150px] flex items-center justify-center bg-linear-to-b from-[#72b4f8] to-[#1a7dfa]">
                <svg viewBox="0 0 54 24" className="w-[54px] h-[24px]" fill="none" stroke="#fff" strokeWidth="2">
                  <circle cx="14" cy="12" r="10" />
                  <circle cx="40" cy="12" r="10" />
                  <path d="M24 10c2-1 4-1 6 0M4 12H1M50 12h3" />
                </svg>
              </div>
              <div className="flex-1 flex items-center justify-center text-[#808080] text-[30px] leading-none font-light">@</div>
            </div>
          </div>
          <div className="flex-1 pt-3 flex flex-col overflow-hidden">
            {reading.map(r => (
              <ReadingItem key={r.url} {...r} />
            ))}
            <div className="flex gap-[19px] pl-[19px] shrink-0">
              <div className="pt-[6px]">
                <div className="w-[106px] h-[106px] rounded-[8px] border border-[#c8c8c8] bg-linear-to-b from-[#e8e8e8] to-[#d4d4d4] flex justify-center pt-[30px]">
                  <div className="w-[4px] h-[60px] bg-white" />
                </div>
              </div>
              <div className="text-[24px] whitespace-nowrap tracking-[-0.3px]">
                <div className="font-bold text-[#333] leading-[32px] tracking-[0.34px]">https://</div>
                <div className="font-bold text-[#333] leading-[32px] tracking-[0.34px] mb-px">my.intermountain.net/Co…</div>
                <div className="text-[#222] leading-[34px]">my.intermountain.net</div>
              </div>
            </div>
          </div>
        </div>

        {/* sololearn page */}
        <div className="flex-1 flex flex-col bg-[#3b3b3b] min-w-0">
          <div className="h-[199px] shrink-0 bg-[#3ea9ca] flex items-center text-white font-['Roboto',sans-serif] shadow-[inset_0_6px_6px_-4px_rgba(0,0,0,0.15)]">
            <div className="ml-[60px] mb-[15px] w-[60px] flex flex-col gap-4">
              <div className="h-[4px] bg-white" />
              <div className="h-[4px] bg-white" />
              <div className="h-[4px] bg-white" />
            </div>
            <svg viewBox="0 0 97 119" className="ml-[170px] w-[97px] h-[119px]" fill="#fdfdfd">
              <path d="M40 0C22 0 13 8 13 22V38C13 49 8 55 0 57V62C8 64 13 70 13 81V97C13 111 22 119 40 119V109C34 108 31 104 31 97V80C31 70 25 62 16 59.500C25 57 31 49 31 39V22C31 15 34 11 40 10Z" />
              <path d="M40 0C22 0 13 8 13 22V38C13 49 8 55 0 57V62C8 64 13 70 13 81V97C13 111 22 119 40 119V109C34 108 31 104 31 97V80C31 70 25 62 16 59.500C25 57 31 49 31 39V22C31 15 34 11 40 10Z" transform="translate(97 0) scale(-1 1)" />
            </svg>
            <span className="ml-[52px] text-[52px] font-light tracking-[0.5px] pt-[4px]">Basic Concepts</span>
            <span className="ml-auto text-[34px] font-light pt-[4px]">XP</span>
            <div className="ml-[21px] mr-[288px] mt-[11px] w-[110px] h-[110px] rounded-full bg-[#78c2d8] flex items-center justify-center text-[34px]">56</div>
          </div>
          <div className="flex-1 flex min-h-0">
            <div className="w-[238px] shrink-0 pl-[132px] pt-[55px]">
              <svg viewBox="0 0 52 52" className="w-[52px] h-[52px]" fill="none" stroke="#fff" strokeWidth="5" strokeLinecap="round">
                <path d="M50 26H4M27 3L3 26l24 23" />
              </svg>
            </div>
            <div className="w-[1600px] shrink-0 bg-[linear-gradient(180deg,#e9e9e9_calc(100%-80px),#d6d6d6_100%)] shadow-[inset_0_3px_3px_-2px_rgba(0,0,0,0.25)] pl-[148px] pt-[89px] font-['Roboto',sans-serif]">
              <div className="grid grid-cols-[repeat(4,310px)] gap-4">
                {lessons.map(l => (
                  <LessonCard key={l.count + l.title} {...l} />
                ))}
              </div>
            </div>
          </div>
        </div>
      </div>
    </div>

    {/* dock */}
    <div className="flex-1 flex mt-[2px] pl-[46px] bg-[#191416]">
      <div className="w-[70px] shrink-0 rounded-tl-[12px] bg-[#75656a] flex justify-center relative">
        <DockSlot>
          <SafariIcon />
        </DockSlot>
        <div className="absolute left-[48px] top-[7px] w-[23px] h-[23px] rounded-full bg-[#d8d8d8] flex items-center justify-center">
          <div className="w-[8px] h-[14px] rounded-[2px] bg-[#333]" />
        </div>
      </div>
      <div className="w-[2392px] shrink-0 ml-[4px] pl-[2px] rounded-t-[12px] flex bg-[linear-gradient(90deg,#6f5f62_0%,#8a777c_25%,#937f80_45%,#9a847e_60%,#8a7478_72%,#967e72_85%,#8b7468_100%)]">
        {dockApps.map((a, i) => (
          <DockSlot key={i} dot={a.dot}>
            {a.icon}
          </DockSlot>
        ))}
        <div className="w-[2px] h-[64px] mt-[12px] ml-[7px] mr-[11px] shrink-0 bg-[#5e4a44]" />
        {dockDocs.map((d, i) => (
          <DockSlot key={i}>{d}</DockSlot>
        ))}
      </div>
      <div className="flex-1 overflow-hidden pl-[2px] pt-[2px] text-[28px] leading-[32px] font-bold text-[#d8d8d8] whitespace-nowrap">
        <div>elux</div>
        <div>6.00</div>
      </div>
    </div>
  </div>
)

export default App
